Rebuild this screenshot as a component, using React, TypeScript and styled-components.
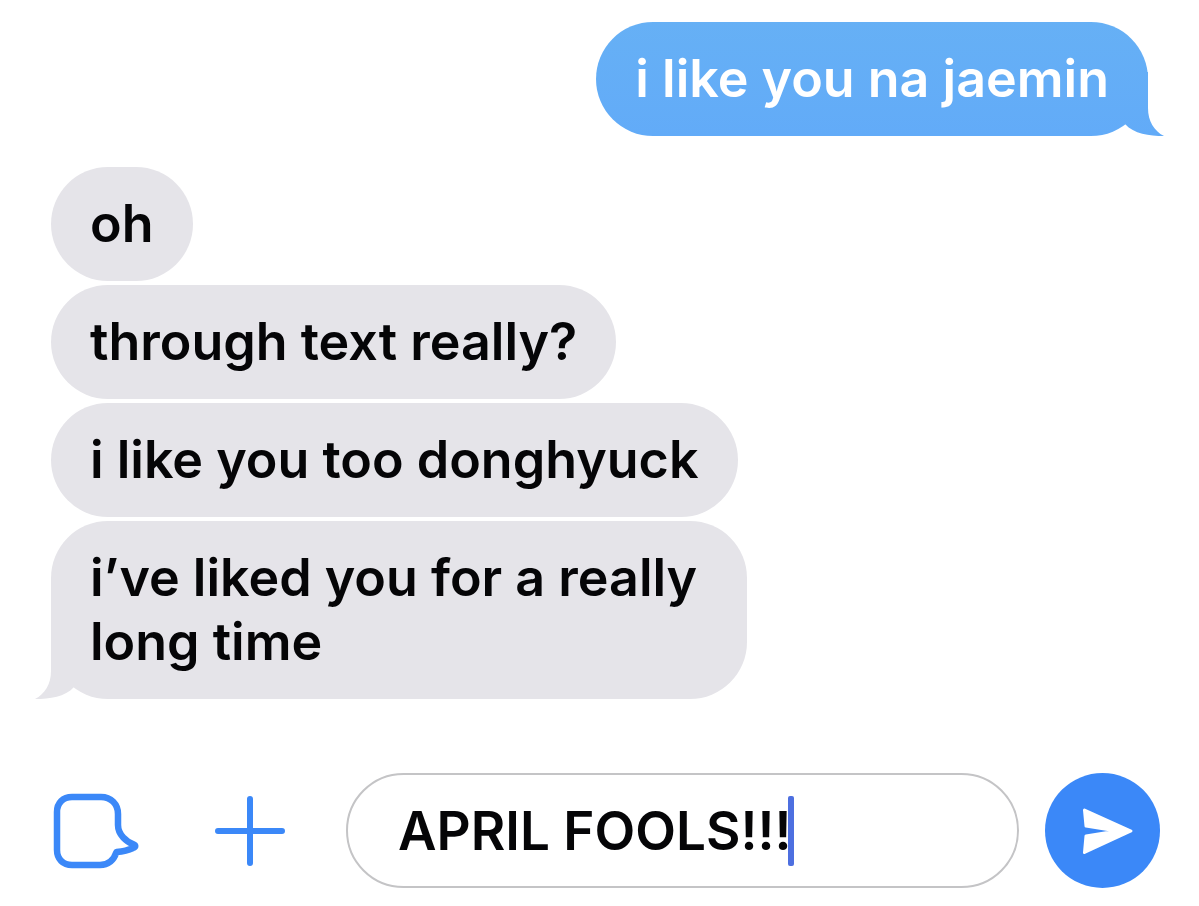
import React, { useState } from 'react';
import styled, { createGlobalStyle, css } from 'styled-components';

const GlobalStyle = createGlobalStyle`
  *, *::before, *::after { box-sizing: border-box; }
  body { margin: 0; background: #fff; }
`;

const Page = styled.main`
  min-height: 100vh;
  padding: 22px 39px 18px 51px;
  background: #fff;
  color: #050507;
  font-family: Inter, 'Liberation Sans', sans-serif;
  font-size: 52px;
  font-weight: 600;
  line-height: 64px;
`;

const Thread = styled.ol`
  display: flex;
  flex-direction: column;
  align-items: flex-start;
  gap: 4px;
  margin: 0;
  padding: 0;
  list-style: none;
`;

const Bubble = styled.li<{ $sent?: boolean }>`
  position: relative;
  max-width: 696px;
  padding: 25px 39px;
  border-radius: 57px;
  background: #e5e4e9;
  ${({ $sent }) =>
    $sent &&
    css`
      align-self: flex-end;
      margin: 0 12px 27px 0;
      background: linear-gradient(#66b0f5, #62abf8);
      color: #fff;
    `}
`;

const TailShape = styled.svg<{ $sent?: boolean }>`
  position: absolute;
  bottom: 0;
  width: 48px;
  height: 64px;
  ${({ $sent }) =>
    $sent
      ? css`
          right: -16px;
          fill: url(#sent-tail);
        `
      : css`
          left: -16px;
          fill: #e5e4e9;
          transform: scaleX(-1);
        `}
`;

const Composer = styled.form`
  display: flex;
  align-items: center;
  margin-top: 74px;
`;

const IconButton = styled.button<{ $gap: number }>`
  flex: none;
  display: flex;
  margin: 0 ${({ $gap }) => $gap}px 0 0;
  padding: 0;
  border: 0;
  background: none;
  color: #3b88f8;
  cursor: pointer;

  svg {
    fill: none;
    stroke: currentColor;
    stroke-linecap: round;
    stroke-linejoin: round;
  }
`;

const Field = styled.label`
  flex: 1;
  min-width: 0;
  display: flex;
  align-items: center;
  height: 115px;
  padding: 0 50px;
  border: 2px solid #c4c4c6;
  border-radius: 58px;
  overflow: hidden;
`;

const MessageInput = styled.input`
  field-sizing: content;
  min-width: 0;
  height: 64px;
  padding: 0;
  border: 0;
  outline: 0;
  background: none;
  color: inherit;
  font: inherit;
  font-size: 53px;
  caret-color: transparent;
`;

const Caret = styled.span`
  flex: none;
  width: 6px;
  height: 70px;
  margin-left: -3px;
  border-radius: 2px;
  background: #4d6fe0;
`;

const SendButton = styled.button`
  flex: none;
  display: grid;
  place-items: center;
  width: 115px;
  height: 115px;
  margin-left: 26px;
  padding: 0;
  border: 0;
  border-radius: 50%;
  background: #3b88f8;
  cursor: pointer;
`;

type Message = { text: string; sent?: boolean; tail?: boolean };

const messages: Message[] = [
  { text: 'i like you na jaemin', sent: true, tail: true },
  { text: 'oh' },
  { text: 'through text really?' },
  { text: 'i like you too donghyuck' },
  { text: 'i’ve liked you for a really long time', tail: true },
];

// The gradient spans the bubble's full height so the tail blends into it.
const Tail = ({ sent }: { sent?: boolean }) => (
  <TailShape $sent={sent} viewBox="0 0 48 64" aria-hidden="true">
    {sent && (
      <linearGradient id="sent-tail" gradientUnits="userSpaceOnUse" x1="0" y1="-50" x2="0" y2="64">
        <stop offset="0" stopColor="#66b0f5" />
        <stop offset="1" stopColor="#62abf8" />
      </linearGradient>
    )}
    <path d="M32 0V36C32 49 38 59 48 64C33 64 18 62 9 52L0 40V0Z" />
  </TailShape>
);

export default function App() {
  const [draft, setDraft] = useState('APRIL FOOLS!!!');

  return (
    <Page>
      <GlobalStyle />
      <Thread>
        {messages.map(({ text, sent, tail }) => (
          <Bubble key={text} $sent={sent}>
            {text}
            {tail && <Tail sent={sent} />}
          </Bubble>
        ))}
      </Thread>
      <Composer onSubmit={(e) => e.preventDefault()}>
        <IconButton type="button" aria-label="Stickers" $gap={76}>
          <svg width="88" height="80" viewBox="0 0 88 80" strokeWidth="6.500">
            <path d="M21 6H50C60 6 67 13 67 23V34C67 44 76 51 82 53C85 54 85 56 82 57C77 59.500 72 60.500 65.500 61C62.500 70 57 74 49 74H21C12 74 6 68 6 59V21C6 12 12 6 21 6Z" />
          </svg>
        </IconButton>
        <IconButton type="button" aria-label="Add attachment" $gap={61}>
          <svg width="70" height="70" viewBox="0 0 70 70" strokeWidth="6">
            <path d="M35 3V67M3 35H67" />
          </svg>
        </IconButton>
        <Field>
          <MessageInput
            aria-label="Message"
            value={draft}
            onChange={(e) => setDraft(e.target.value)}
          />
          <Caret />
        </Field>
        <SendButton type="submit" aria-label="Send">
          <svg width="114" height="114" viewBox="0 0 114 114" fill="#fff" stroke="#fff" strokeWidth="3" strokeLinejoin="round">
            <path d="M38.500 36L85 57L38.500 78.500L40 62L71 57L40 52Z" />
          </svg>
        </SendButton>
      </Composer>
    </Page>
  );
}
